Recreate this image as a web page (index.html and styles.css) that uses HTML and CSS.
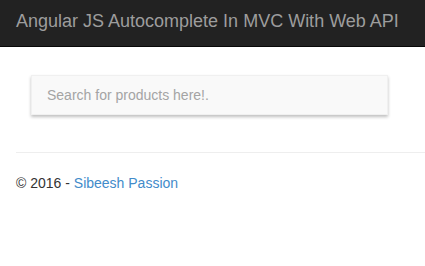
FILE: index.html
```html
<!DOCTYPE html>
<html>
<head>
<meta charset="utf-8">
<link rel="stylesheet" href="styles.css">
</head>
<body>
<nav class="navbar">
  <a class="brand" href="#">Angular JS Autocomplete In MVC With Web API</a>
</nav>
<main class="content">
  <div class="search-wrap">
    <input class="search" type="text" placeholder="Search for products here!.">
  </div>
  <hr class="divider">
  <footer class="footer">
    <p>&copy; 2016 - <a href="#" class="author">Sibeesh Passion</a></p>
  </footer>
</main>
</body>
</html>
```
FILE: styles.css
```css
* { box-sizing: border-box; }
html, body { margin: 0; padding: 0; background: #fff; }
body {
  font-family: "Liberation Sans", Arial, sans-serif;
  font-size: 14px;
  line-height: 20px;
  color: #333;
}
.navbar {
  background: #222;
  border-bottom: 1px solid #080808;
  height: 47px;
  padding: 11px 16px 0;
}
.brand {
  display: block;
  font-size: 18px;
  line-height: 20px;
  color: #9d9d9d;
  text-decoration: none;
  white-space: nowrap;
}
.content {
  padding: 0 0 0 16px;
}
.search-wrap {
  padding: 28px 0 0 15px;
}
.search {
  display: block;
  width: 357px;
  height: 40px;
  border: 1px solid #f0f0f0;
  background: #f9f9f9;
  box-shadow: 0 2px 3px rgba(0,0,0,0.25);
  padding: 0 0 0 15px;
  font: 14px "Liberation Sans", Arial, sans-serif;
  color: #555;
  outline: none;
}
.search::placeholder { color: #a4a4a4; }
.divider {
  margin: 37px 0 0;
  border: 0;
  border-top: 1px solid #eee;
}
.footer p {
  margin: 20px 0 0;
}
.author {
  color: #428bca;
  text-decoration: none;
}
```
